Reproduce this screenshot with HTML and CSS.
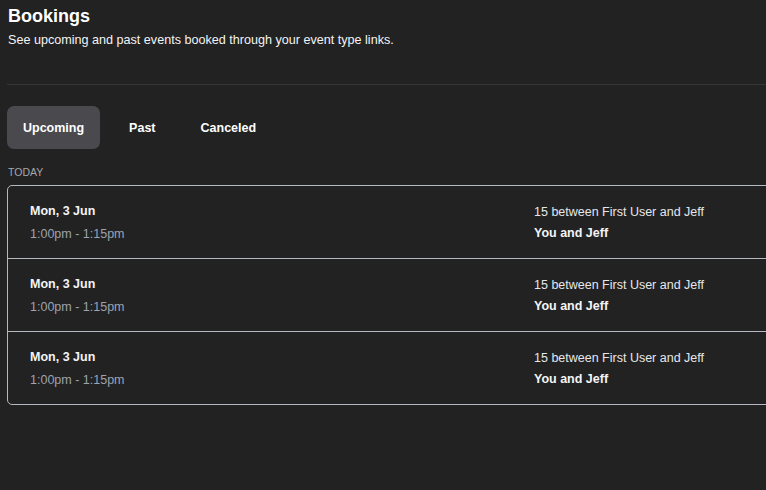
FILE: index.html
```html
<!DOCTYPE html>
<html lang="en">
<head>
<meta charset="utf-8">
<title>Bookings</title>
<link rel="stylesheet" href="styles.css">
</head>
<body>
<main class="page">
  <header class="header">
    <h1 class="title">Bookings</h1>
    <p class="subtitle">See upcoming and past events booked through your event type links.</p>
  </header>
  <hr class="divider">
  <nav class="tabs">
    <button class="tab tab-active">Upcoming</button>
    <button class="tab">Past</button>
    <button class="tab">Canceled</button>
  </nav>
  <div class="section-label">TODAY</div>
  <ul class="list">
    <li class="row">
      <div class="when">
        <div class="date">Mon, 3 Jun</div>
        <div class="time">1:00pm - 1:15pm</div>
      </div>
      <div class="what">
        <div class="event">15 between First User and Jeff</div>
        <div class="people">You and Jeff</div>
      </div>
    </li>
    <li class="row">
      <div class="when">
        <div class="date">Mon, 3 Jun</div>
        <div class="time">1:00pm - 1:15pm</div>
      </div>
      <div class="what">
        <div class="event">15 between First User and Jeff</div>
        <div class="people">You and Jeff</div>
      </div>
    </li>
    <li class="row">
      <div class="when">
        <div class="date">Mon, 3 Jun</div>
        <div class="time">1:00pm - 1:15pm</div>
      </div>
      <div class="what">
        <div class="event">15 between First User and Jeff</div>
        <div class="people">You and Jeff</div>
      </div>
    </li>
  </ul>
</main>
</body>
</html>
```
FILE: styles.css
```css
html, body {
  margin: 0;
  padding: 0;
  background: #222222;
  overflow: hidden;
}
body {
  font-family: "Liberation Sans", Arial, sans-serif;
  color: #f3f4f6;
}
.page {
  width: 820px;
  padding: 6px 0 0 7px;
  display: flex;
  flex-direction: column;
}
.header {
  padding-left: 1px;
}
.title {
  margin: 0;
  font-size: 18px;
  line-height: 20px;
  font-weight: 700;
  color: #ffffff;
}
.subtitle {
  margin: 6px 0 0;
  font-size: 12.6px;
  line-height: 16px;
  color: #f3f4f6;
}
.divider {
  margin: 36px 0 0;
  border: 0;
  height: 1px;
  background: #363636;
}
.tabs {
  margin-top: 21px;
  display: flex;
  gap: 13px;
}
.tab {
  height: 43px;
  padding: 0 16px;
  border: 0;
  border-radius: 7px;
  background: transparent;
  font-family: inherit;
  font-size: 12.5px;
  font-weight: 700;
  color: #ffffff;
}
.tab-active {
  background: #4a4a4e;
}
.section-label {
  margin-top: 16px;
  padding-left: 1px;
  font-size: 10.5px;
  line-height: 14px;
  color: #a3a7ae;
}
.list {
  list-style: none;
  margin: 6px 0 0;
  padding: 0;
  border: 1px solid #b4b8bf;
  border-radius: 5px;
}
.row {
  height: 72px;
  display: flex;
  align-items: center;
  padding-left: 22px;
  font-size: 12.5px;
}
.row + .row {
  border-top: 1px solid #b4b8bf;
}
.when {
  width: 504px;
  display: flex;
  flex-direction: column;
  gap: 7px;
}
.date {
  line-height: 16px;
  font-weight: 700;
  color: #f3f4f6;
}
.time {
  line-height: 16px;
  color: #9ca3af;
}
.what {
  display: flex;
  flex-direction: column;
  gap: 5px;
}
.event {
  line-height: 16px;
  color: #e5e7eb;
}
.people {
  line-height: 16px;
  font-weight: 700;
  color: #f3f4f6;
}
```
